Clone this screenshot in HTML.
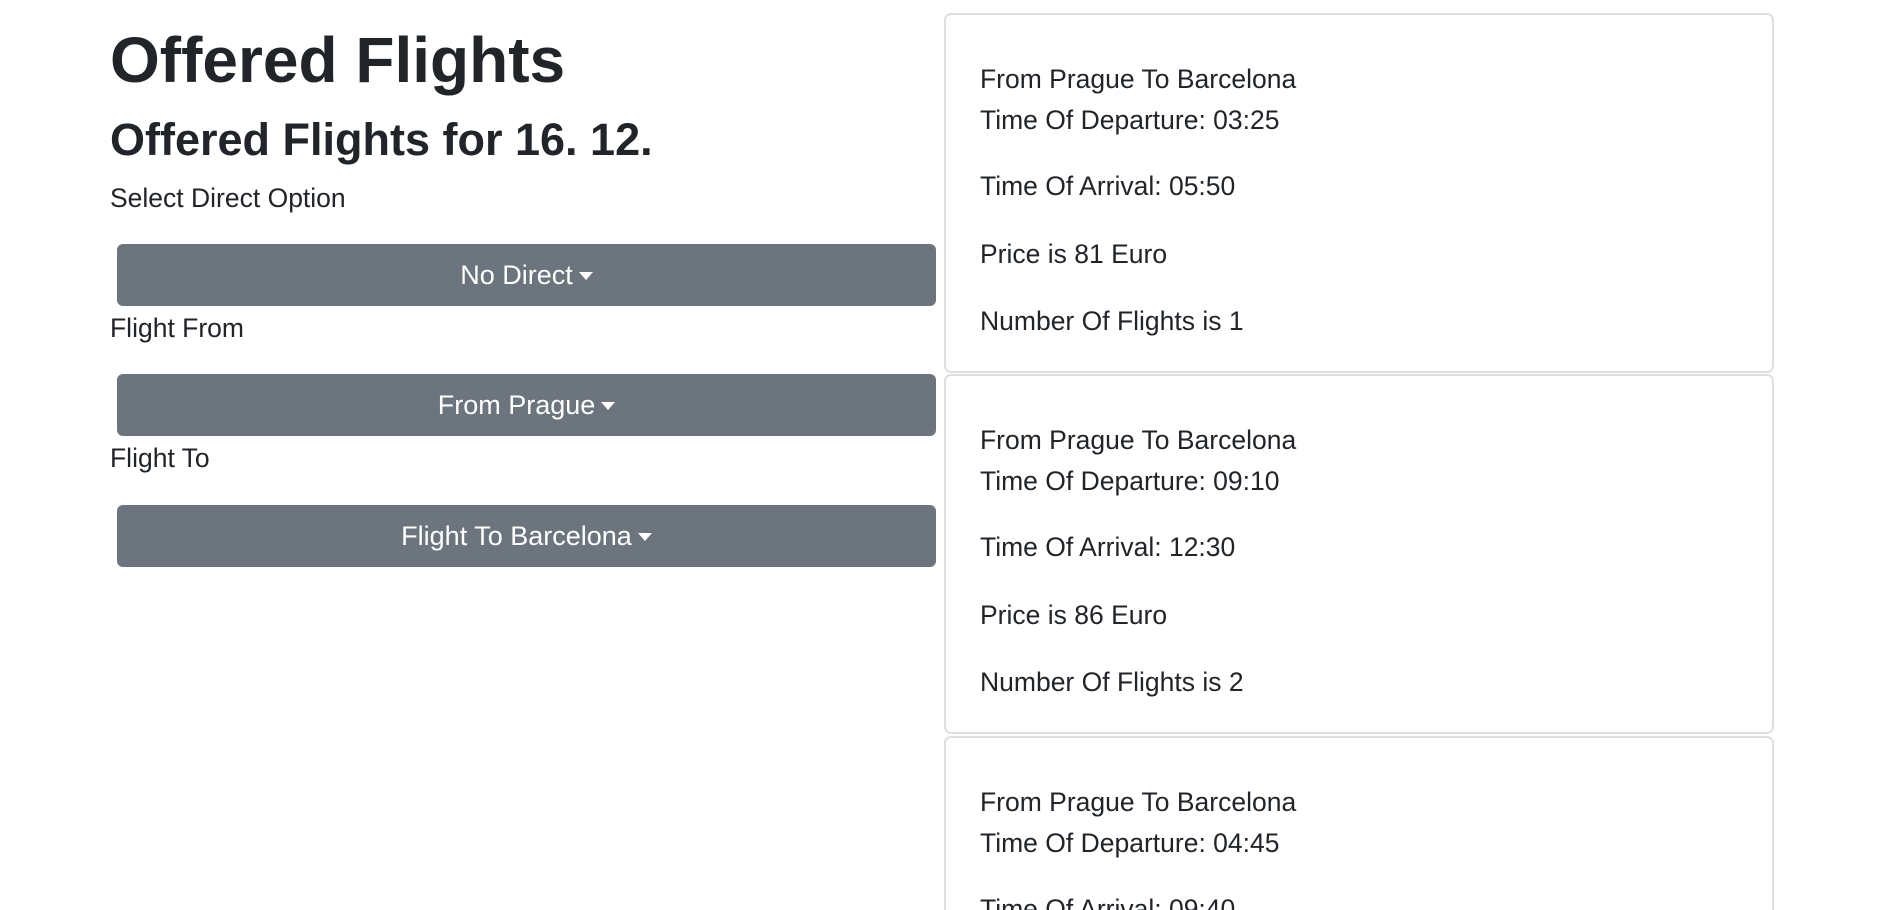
<!DOCTYPE html>
<html><head><meta charset="utf-8"><style>
html,body{margin:0;padding:0;width:1881px;height:910px;overflow:hidden;background:#fff;}
body{font-family:"Liberation Sans",sans-serif;color:#212529;position:relative;}
.wrap{position:absolute;left:0;top:0;width:1881px;height:910px;overflow:hidden;}
.t{position:absolute;line-height:1;white-space:nowrap;font-size:26.5px;}
.h1{font-size:64px;font-weight:bold;}
.h2{font-size:45px;font-weight:bold;}
.btn{position:absolute;left:117px;width:819px;height:62px;background:#6c757d;border-radius:6px;color:#fff;font-size:27px;line-height:62px;text-align:center;}
.caret{display:inline-block;width:0;height:0;border-left:7px solid transparent;border-right:7px solid transparent;border-top:8px solid #fff;vertical-align:4px;margin-left:6px;}
.card{position:absolute;left:944px;width:826px;height:356px;border:2px solid #dfdfdf;border-radius:7px;}
.card .t{left:34px;}
</style></head><body><div class="wrap">
<div class="t h1" style="left:110px;top:28px">Offered Flights</div>
<div class="t h2" style="left:110px;top:117px">Offered Flights for 16. 12.</div>
<div class="t" style="left:110px;top:185px">Select Direct Option</div>
<div class="btn" style="top:244px">No Direct<span class="caret"></span></div>
<div class="t" style="left:110px;top:315px">Flight From</div>
<div class="btn" style="top:374px">From Prague<span class="caret"></span></div>
<div class="t" style="left:110px;top:445px">Flight To</div>
<div class="btn" style="top:505px">Flight To Barcelona<span class="caret"></span></div>

<div class="card" style="top:13px">
<div class="t" style="top:51px">From Prague To Barcelona</div>
<div class="t" style="top:92px">Time Of Departure: 03:25</div>
<div class="t" style="top:158px">Time Of Arrival: 05:50</div>
<div class="t" style="top:226px">Price is 81 Euro</div>
<div class="t" style="top:293px">Number Of Flights is 1</div>
</div>
<div class="card" style="top:374px">
<div class="t" style="top:51px">From Prague To Barcelona</div>
<div class="t" style="top:92px">Time Of Departure: 09:10</div>
<div class="t" style="top:158px">Time Of Arrival: 12:30</div>
<div class="t" style="top:226px">Price is 86 Euro</div>
<div class="t" style="top:293px">Number Of Flights is 2</div>
</div>
<div class="card" style="top:736px">
<div class="t" style="top:51px">From Prague To Barcelona</div>
<div class="t" style="top:92px">Time Of Departure: 04:45</div>
<div class="t" style="top:158px">Time Of Arrival: 09:40</div>
<div class="t" style="top:226px">Price is 90 Euro</div>
<div class="t" style="top:293px">Number Of Flights is 3</div>
</div>
</div></body></html>
